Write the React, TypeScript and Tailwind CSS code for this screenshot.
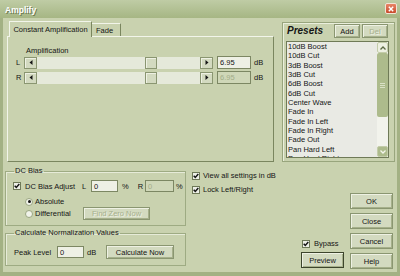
import React from 'react';

const presets = [
  '10dB Boost',
  '10dB Cut',
  '3dB Boost',
  '3dB Cut',
  '6dB Boost',
  '6dB Cut',
  'Center Wave',
  'Fade In',
  'Fade In Left',
  'Fade In Right',
  'Fade Out',
  'Pan Hard Left',
  'Pan Hard Right',
];

function Btn({
  children,
  className = '',
  disabled = false,
  primary = false,
}: {
  children: React.ReactNode;
  className?: string;
  disabled?: boolean;
  primary?: boolean;
}) {
  return (
    <div
      className={`flex items-center justify-center border bg-[#d3dac0] shadow-[inset_1px_1px_0_#eef1e3,inset_-1px_-1px_0_#a6b08b] ${
        primary ? 'border-[#3d452c]' : 'border-[#8a9671]'
      } ${disabled ? 'text-[#a6af8c] [text-shadow:1px_1px_0_#eef1e3]' : 'text-[#151515]'} ${className}`}
    >
      {children}
    </div>
  );
}

function Check() {
  return (
    <span className="flex h-[8px] w-[8px] shrink-0 items-center justify-center border border-[#6e7957] bg-[#eef0e7]">
      <svg width="6" height="6" viewBox="0 0 6 6">
        <path d="M0.7 2.7 L2.3 4.4 L5.3 1.1" stroke="#141414" strokeWidth="1.5" fill="none" />
      </svg>
    </span>
  );
}

function Radio({ on = false }: { on?: boolean }) {
  return (
    <span className="flex h-[8px] w-[8px] shrink-0 items-center justify-center rounded-full border border-[#9aa682] bg-[#f1f3ea]">
      {on && <span className="h-[3px] w-[3px] rounded-full bg-[#151515]" />}
    </span>
  );
}

function Arrow({ dir }: { dir: 'left' | 'right' }) {
  return (
    <div className="flex h-full w-[13px] shrink-0 items-center justify-center border border-[#8a9671] bg-[#d3dac0] shadow-[inset_1px_1px_0_#eef1e3]">
      <svg width="4" height="5" viewBox="0 0 4 5">
        {dir === 'left' ? <path d="M3.5 0 L0.5 2.5 L3.5 5 Z" fill="#151515" /> : <path d="M0.5 0 L3.5 2.5 L0.5 5 Z" fill="#151515" />}
      </svg>
    </div>
  );
}

function SliderRow({ label, value, disabled = false }: { label: string; value: string; disabled?: boolean }) {
  return (
    <div className="flex h-[13px] items-center">
      <span className="w-[8px]">{label}</span>
      <div className="flex h-[12px] w-[189px]">
        <Arrow dir="left" />
        <div className="flex flex-1 bg-[#e5e9da] pl-[108px]">
          <div className="h-full w-[12px] border border-[#8a9671] bg-[#d3dac0] shadow-[inset_1px_1px_0_#eef1e3]" />
        </div>
        <Arrow dir="right" />
      </div>
      <div
        className={`ml-[4px] flex h-[13px] w-[34px] items-center border border-[#7c8763] pl-[2px] ${
          disabled ? 'bg-[#cfd7b8] text-[#a3ad88]' : 'bg-[#eef0e5] text-[#151515]'
        }`}
      >
        {value}
      </div>
      <span className="ml-[3px]">dB</span>
    </div>
  );
}

function Field({ value, w, disabled = false }: { value: string; w: string; disabled?: boolean }) {
  return (
    <div
      className={`flex h-[12px] items-center border border-[#7c8763] pl-[2px] ${w} ${
        disabled ? 'bg-[#cfd7b8] text-[#a3ad88]' : 'bg-[#eef0e5] text-[#151515]'
      }`}
    >
      {value}
    </div>
  );
}

export default function App() {
  return (
    <div className="flex h-[276px] w-[400px] flex-col overflow-hidden bg-[#a3b184] font-['Liberation_Sans',Arial,sans-serif] text-[7.5px] leading-[9px] text-[#151515]">
      {/* title bar */}
      <div className="flex h-[18px] shrink-0 items-start justify-between bg-gradient-to-b from-[#bfcca5] to-[#a6b684] pl-[5px] pr-[3px]">
        <span className="mt-[5px] text-[8.5px] font-bold leading-[10px] text-white [text-shadow:1px_1px_0_#6d7a52]">Amplify</span>
        <div className="mt-[3px] flex h-[11px] w-[12px] items-center justify-center rounded-[2px] border border-[#f3e3d6] bg-gradient-to-b from-[#e88566] to-[#c84a2c]">
          <svg width="6" height="6" viewBox="0 0 6 6">
            <path d="M0.8 0.8 L5.2 5.2 M5.2 0.8 L0.8 5.2" stroke="white" strokeWidth="1.4" />
          </svg>
        </div>
      </div>

      <div className="flex flex-1 flex-col border-x-[3px] border-b-[4px] border-[#a3b184] bg-[#c9d2af]">
        {/* top row */}
        <div className="mt-[3px] flex pl-[4px]">
          <div className="flex w-[267px] flex-col">
            <div className="flex h-[15px] items-end pl-[2px]">
              <div className="relative z-10 -mb-px flex h-[16px] w-[83px] items-center justify-center border-l border-r border-t border-l-[#f2f5ea] border-r-[#7a865f] border-t-[#f2f5ea] bg-[#c9d2af]">
                Constant Amplification
              </div>
              <div className="flex h-[13px] w-[29px] items-center border-r border-t border-r-[#7a865f] border-t-[#f2f5ea] pl-[4px]">
                Fade
              </div>
            </div>
            <div className="flex h-[126px] flex-col border border-b-[#7a865f] border-l-[#f2f5ea] border-r-[#7a865f] border-t-[#f2f5ea] pl-[8px] pt-[9px]">
              <span className="ml-[10px]">Amplification</span>
              <div className="mt-px flex flex-col gap-[2px]">
                <SliderRow label="L" value="6.95" />
                <SliderRow label="R" value="6.95" disabled />
              </div>
            </div>
          </div>

          {/* presets */}
          <div className="ml-[8px] mt-px flex h-[140px] w-[113px] flex-col border border-[#98a57d] shadow-[inset_1px_1px_0_#eaefdc]">
            <div className="flex h-[16px] items-center pl-[4px] pr-[6px]">
              <span className="text-[10px] font-bold italic leading-[12px]">Presets</span>
              <Btn className="ml-auto h-[14px] w-[26px]">Add</Btn>
              <Btn className="ml-[2px] h-[14px] w-[26px]" disabled>
                Del
              </Btn>
            </div>
            <div className="ml-[3px] mt-[2px] flex h-[117px] w-[103px] border border-[#6f7a57] bg-[#e9eae4]">
              <div className="flex-1 overflow-hidden pl-px leading-[9.33px]">
                {presets.map((p) => (
                  <div key={p} className="whitespace-nowrap">
                    {p}
                  </div>
                ))}
              </div>
              <div className="flex w-[11px] flex-col bg-[#f2f3ec]">
                <div className="flex h-[11px] items-center justify-center rounded-[2px] border border-[#c3cca9] bg-[#edf0e2]">
                  <svg width="6" height="4" viewBox="0 0 6 4">
                    <path d="M0.5 3.5 L3 1 L5.5 3.5" stroke="#5d6a45" strokeWidth="1.3" fill="none" />
                  </svg>
                </div>
                <div className="flex h-[64px] items-center justify-center rounded-[2px] bg-[#adbb8c]">
                  <div className="flex flex-col gap-px">
                    <span className="h-px w-[5px] bg-[#d9e0c6]" />
                    <span className="h-px w-[5px] bg-[#d9e0c6]" />
                    <span className="h-px w-[5px] bg-[#d9e0c6]" />
                  </div>
                </div>
                <div className="flex-1" />
                <div className="flex h-[11px] items-center justify-center rounded-[2px] border border-[#c3cca9] bg-[#adbb8c]">
                  <svg width="6" height="4" viewBox="0 0 6 4">
                    <path d="M0.5 0.5 L3 3 L5.5 0.5" stroke="#f4f6ec" strokeWidth="1.3" fill="none" />
                  </svg>
                </div>
              </div>
            </div>
          </div>
        </div>

        {/* bottom row */}
        <div className="mt-[5px] flex pl-[2px]">
          <div className="flex w-[181px] flex-col">
            <fieldset className="border border-[#9eab83] pb-[5px] pl-[7px] shadow-[inset_1px_1px_0_#e6ebd8]">
              <legend className="ml-px px-px leading-[8px]">DC Bias</legend>
              <div className="mt-[5px] flex h-[12px] items-center">
                <Check />
                <span className="ml-[4px] w-[57px]">DC Bias Adjust</span>
                <span className="w-[9px]">L</span>
                <Field value="0" w="w-[27px]" />
                <span className="ml-[4px]">%</span>
                <span className="ml-[9px]">R</span>
                <div className="ml-[2px]">
                  <Field value="0" w="w-[29px]" disabled />
                </div>
                <span className="ml-[2px]">%</span>
              </div>
              <div className="mt-[4px] flex h-[11px] items-center pl-[12px]">
                <Radio on />
                <span className="ml-[2px]">Absolute</span>
              </div>
              <div className="flex h-[13px] items-center pl-[12px]">
                <Radio />
                <span className="ml-[2px] w-[48px]">Differential</span>
                <Btn className="h-[13px] w-[67px]" disabled>
                  Find Zero Now
                </Btn>
              </div>
            </fieldset>
            <fieldset className="mt-[3px] border border-[#9eab83] pb-[6px] pl-[8px] shadow-[inset_1px_1px_0_#e6ebd8]">
              <legend className="px-px leading-[8px]">Calculate Normalization Values</legend>
              <div className="mt-[8px] flex h-[14px] items-center">
                <span className="w-[43px]">Peak Level</span>
                <Field value="0" w="w-[27px]" />
                <span className="ml-[3px] w-[10px]">dB</span>
                <Btn className="ml-[9px] h-[14px] w-[68px]">Calculate Now</Btn>
              </div>
            </fieldset>
          </div>

          <div className="flex w-[115px] flex-col gap-[5px] pl-[6px] pt-[4px]">
            <div className="flex h-[9px] items-center">
              <Check />
              <span className="ml-[3px] whitespace-nowrap">View all settings in dB</span>
            </div>
            <div className="flex h-[9px] items-center">
              <Check />
              <span className="ml-[3px]">Lock Left/Right</span>
            </div>
          </div>

          <div className="flex w-[44px] flex-col pt-[72px]">
            <div className="flex h-[9px] items-center pl-px">
              <Check />
              <span className="ml-[4px]">Bypass</span>
            </div>
            <Btn primary className="mt-[4px] h-[16px] w-[43px]">
              Preview
            </Btn>
          </div>

          <div className="ml-[5px] flex w-[43px] flex-col gap-[4px] pt-[26px]">
            <Btn className="h-[16px]">OK</Btn>
            <Btn className="h-[16px]">Close</Btn>
            <Btn className="h-[16px]">Cancel</Btn>
            <Btn className="h-[16px]">Help</Btn>
          </div>
        </div>
      </div>
    </div>
  );
}
